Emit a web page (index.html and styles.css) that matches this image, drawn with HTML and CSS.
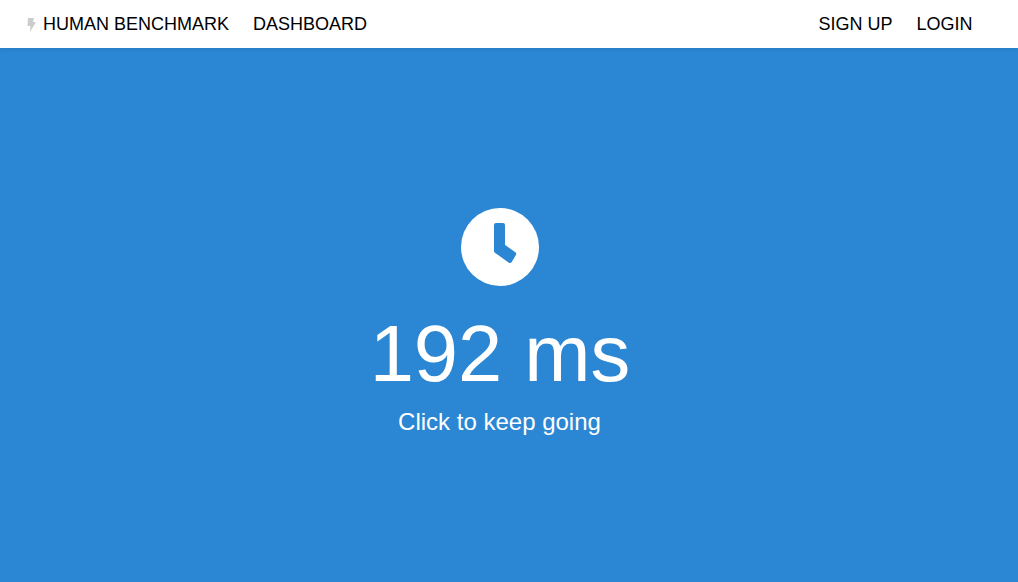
FILE: index.html
```html
<!DOCTYPE html>
<html lang="en">
<head>
  <meta charset="UTF-8">
  <title>Reaction Time Test</title>
  <link rel="stylesheet" href="styles.css">
</head>
<body>
  <nav class="navbar">
    <div class="nav-group">
      <a class="nav-link brand" href="#">
        <svg class="bolt" width="9" height="14" viewBox="0 0 9 14"><path d="M1 0H7L6 4H9L3 14L3.5 8H.5Z"/></svg>
        HUMAN BENCHMARK
      </a>
      <a class="nav-link" href="#">DASHBOARD</a>
    </div>
    <div class="nav-group">
      <a class="nav-link" href="#">SIGN UP</a>
      <a class="nav-link" href="#">LOGIN</a>
    </div>
  </nav>

  <main class="result">
    <svg class="clock" width="78" height="78" viewBox="0 0 78 78">
      <circle cx="39" cy="39" r="39" fill="#fff"/>
      <path d="M35 17H42V38L53.2 46L49 53L35 43Z" fill="#2b87d3" stroke="#2b87d3" stroke-width="4" stroke-linejoin="round"/>
    </svg>
    <div class="time">192 ms</div>
    <div class="hint">Click to keep going</div>
  </main>
</body>
</html>
```

FILE: styles.css
```css
* {
  box-sizing: border-box;
}

html, body {
  height: 100%;
}

body {
  margin: 0;
  display: flex;
  flex-direction: column;
  font-family: "Liberation Sans", Arial, sans-serif;
  background: #2b87d3;
  overflow: hidden;
}

.navbar {
  display: flex;
  justify-content: space-between;
  align-items: center;
  height: 48px;
  padding: 0 45.5px 0 27px;
  background: #fff;
  box-shadow: 0 2px 4px rgba(0, 0, 0, 0.06);
}

.nav-group {
  display: flex;
  gap: 24px;
}

.nav-link {
  display: flex;
  align-items: center;
  font-size: 18px;
  line-height: 24px;
  color: #000;
  text-decoration: none;
}

.bolt {
  margin-right: 7px;
  margin-top: 2px;
  fill: #ccc;
}

.result {
  flex: 1;
  display: flex;
  flex-direction: column;
  align-items: center;
  padding: 160px 18px 0 0;
  color: #fff;
}

.clock {
  display: block;
}

.time {
  margin-top: 22px;
  font-size: 79.5px;
  line-height: 92px;
}

.hint {
  margin-top: 6px;
  padding-right: 1px;
  font-size: 24px;
  line-height: 32px;
}
```
